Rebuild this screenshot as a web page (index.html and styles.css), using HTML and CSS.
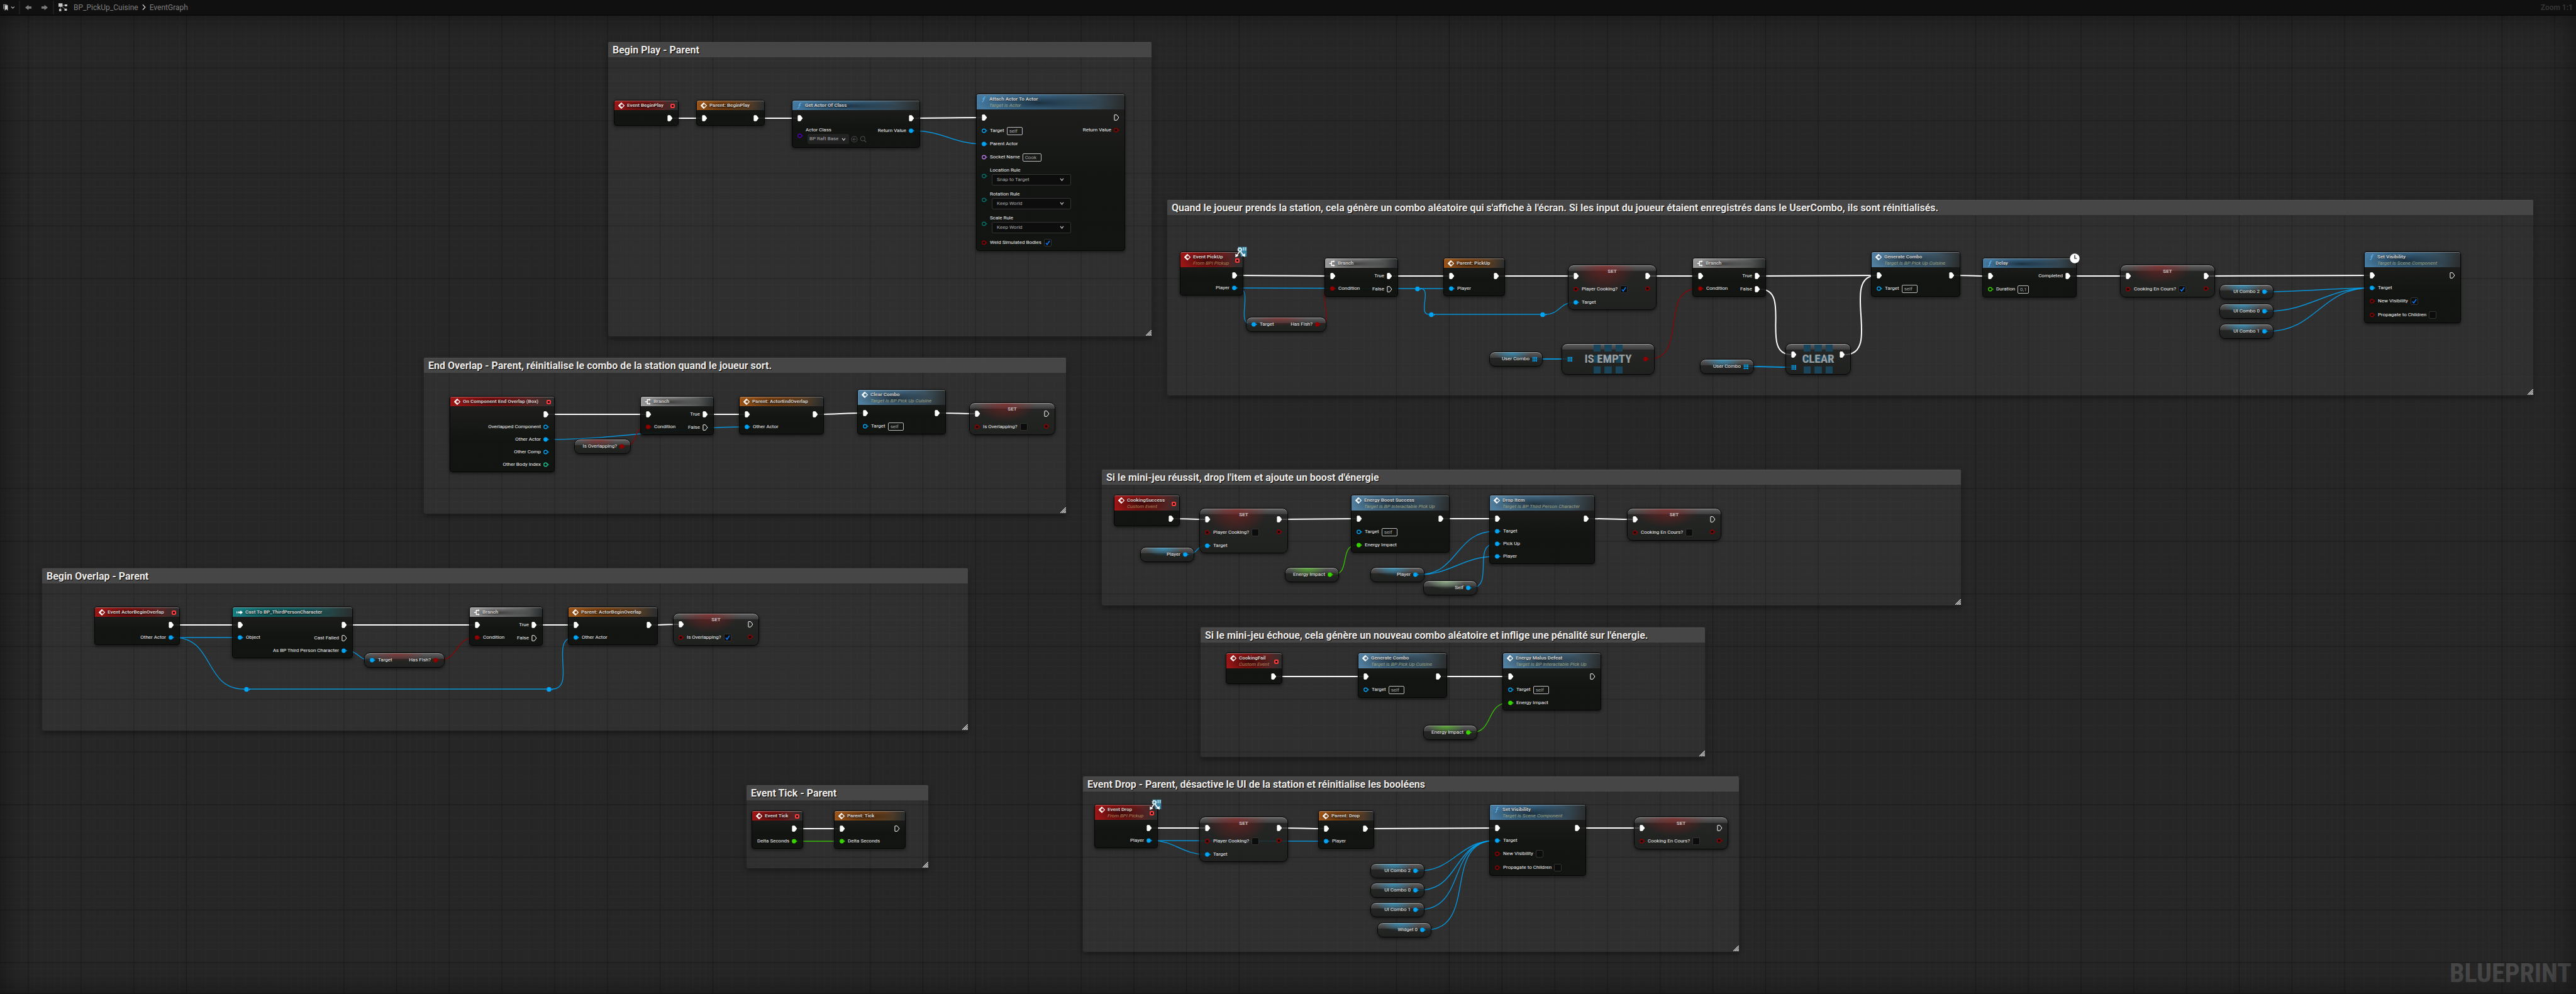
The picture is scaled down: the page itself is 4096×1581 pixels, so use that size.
FILE: index.html
```html
<!DOCTYPE html>
<html lang="fr">
<head>
<meta charset="utf-8">
<title>BP_PickUp_Cuisine - EventGraph</title>
<link rel="stylesheet" href="styles.css">
</head>
<body>
<svg class="sprite" aria-hidden="true">
  <symbol id="i-event" viewBox="0 0 14 14"><path d="M7 .8 13.2 7 7 13.2 .8 7z" fill="none" stroke="#fff" stroke-width="1.5"/><path d="M8 1 8 5 5 5 5 9 8 9 8 13 6.500 13 .5 7 6.500 1z" fill="#fff"/></symbol>
  <symbol id="i-fn" viewBox="0 0 14 14"><path d="M11 2.200C9.500.8 8.100 1.600 7.700 3.600L6.200 10.500C5.800 12.400 4.500 13.200 3 12M4.800 6h5" fill="none" stroke="#5fb4f0" stroke-width="1.600"/></symbol>
  <symbol id="i-branch" viewBox="0 0 14 14"><path d="M1 7h5M11 2.500H6v9h5" fill="none" stroke="#fff" stroke-width="2"/><path d="M10 0l3.500 2.500L10 5zM10 9l3.500 2.500L10 14z" fill="#fff"/></symbol>
  <symbol id="i-cast" viewBox="0 0 14 14"><path d="M0 5h1.500v4H0zM3 5h2v4H3zM6 5h3V2.500L14 7 9 11.500V9H6z" fill="#fff"/></symbol>
  <symbol id="p-exec" viewBox="0 0 12 14"><path d="M1.500 1h4.700L10.800 7 6.200 13H1.500Q1 13 1 12.500V1.500Q1 1 1.500 1z" stroke="#fff" stroke-width="1.400" stroke-linejoin="round"/></symbol>
  <symbol id="p-data" viewBox="0 0 14 12"><circle cx="5.500" cy="6" r="4.300" stroke="currentColor" stroke-width="2"/><path d="M11.300 3.500 14 6l-2.700 2.500z" fill="currentColor"/></symbol>
  <symbol id="p-array" viewBox="0 0 12 12"><path d="M1 1h3v3H1zM5 1h3v3H5zM9 1h3v3H9zM1 5h3v3H1zM5 5h3v3H5zM9 5h3v3H9zM1 9h3v3H1zM5 9h3v3H5zM9 9h3v3H9z" fill="currentColor"/></symbol>
  <symbol id="i-grid" viewBox="0 0 70 70"><path d="M0 0h17v17H0zM26 0h18v17H26zM53 0h17v17H53zM0 26h17v18H0zM26 26h18v18H26zM53 26h17v18H53zM0 53h17v17H0zM26 53h18v17H26zM53 53h17v17H53z" fill="#1a4459"/></symbol>
  <symbol id="i-clock" viewBox="0 0 24 24"><circle cx="12" cy="12" r="11.500" fill="#fff"/><path d="M12 4v8h5" fill="none" stroke="#111" stroke-width="1.800"/></symbol>
  <symbol id="i-iface" viewBox="0 0 30 28"><path d="M6 1h22v24H14z" fill="#3a83a3"/><path d="M19 2h3v8h-3zM24 2h3v8h-3z" fill="#a9dbe6"/><circle cx="11" cy="8" r="5" fill="none" stroke="#e8f6fa" stroke-width="2.500" stroke-dasharray="2.200 1.700"/><circle cx="11" cy="8" r="3.500" fill="none" stroke="#e8f6fa" stroke-width="2"/><path d="M10 13 4 22M13 13l7 9" stroke="#fff" stroke-width="2.500"/><path d="M0 18v9l8-4zM24 17v9l-8-4z" fill="#fff"/></symbol>
  <symbol id="i-grip" viewBox="0 0 13 13"><path d="M0 13 13 0M4 13l9-9M8 13l5-5M11.500 13l1.500-1.500" stroke="#eee" stroke-width="1.600"/></symbol>
  <symbol id="i-back" viewBox="0 0 14 14"><path d="M7.500 1v3.600H14v4.800H7.500V13L0 7z" fill="currentColor"/></symbol>
  <symbol id="i-use" viewBox="0 0 16 16"><circle cx="8" cy="8" r="6.500" fill="none" stroke="currentColor" stroke-width="1.500"/><path d="M12 8H5M8 5 5 8l3 3" fill="none" stroke="currentColor" stroke-width="1.500"/></symbol>
  <symbol id="i-find" viewBox="0 0 16 16"><circle cx="7" cy="6.500" r="5" fill="none" stroke="currentColor" stroke-width="1.500"/><path d="M10.500 10.500 15 15" stroke="currentColor" stroke-width="1.800"/></symbol>
</svg>

<header class="toolbar">
  <button class="tool tool-marks" aria-label="Bookmarks">
    <svg viewBox="0 0 28 17" width="18" height="11"><path d="M0 1h9v2H2.500v9L0 14z" fill="#777"/><path d="M4 3.500h7.500V17L7.800 13 4 17z" fill="#d2d2d2"/><path d="m20 7 4 4 4-4" fill="none" stroke="#ccc" stroke-width="1.600"/></svg>
  </button>
  <span class="rule"></span>
  <button class="tool" aria-label="Back"><svg width="12" height="10"><use href="#i-back"/></svg></button>
  <button class="tool flip" aria-label="Forward"><svg width="12" height="10"><use href="#i-back"/></svg></button>
  <span class="rule"></span>
  <nav class="crumbs">
    <svg viewBox="0 0 22 20" width="14" height="13"><path d="M5 5h13M5 5v12M5 5l13 11" stroke="#999" stroke-width="1.200"/><path d="M0 0h10v9H0zM15.500 3H22v4.500h-6.500zM1.500 14.500H7V20H1.500zM15 13.500h6v5h-6z" fill="#c8c8c8"/></svg>
    <a href="#blueprint">BP_PickUp_Cuisine</a>
    <svg viewBox="0 0 10 16" width="6" height="11"><path d="m1.500 1 6.500 7-6.500 7" fill="none" stroke="#fff" stroke-width="1.800"/></svg>
    <a href="#graph">EventGraph</a>
  </nav>
  <output class="zoom">Zoom 1:1</output>
</header>

<main class="graph" id="graph">
  <div class="comments" id="comments"></div>
  <svg class="wires" id="wires"></svg>
  <div class="nodes" id="nodes"></div>
  <p class="watermark">BLUEPRINT</p>
</main>
<script src="graph.js"></script>
</body>
</html>
```

FILE: styles.css
```css
:root {
  --cell: calc(100vw * 16 / 6264);
  --block: calc(100vw * 128 / 6264);
  --bool: #930000;
  --obj: #00a5f5;
  --real: #38d400;
  --int: #1cc795;
  --enum: #00736a;
  --name: #b77ae8;
  --class: #5200b0;
}

* { box-sizing: border-box; }

body {
  margin: 0;
  height: 100vh;
  display: flex;
  flex-direction: column;
  background: #262626;
  color: #eee;
  font: 8px/10px Roboto, "Liberation Sans", sans-serif;
}

h2, h3, p { margin: 0; font-size: inherit; }
svg { display: block; flex: none; }
.sprite { position: absolute; width: 0; height: 0; }

/* toolbar */
.toolbar {
  display: flex;
  align-items: center;
  height: 25px;
  padding: 0 5px;
  background: #101010;
  border-bottom: 2px solid #0b0b0b;
  font-size: 12px;
  line-height: 16px;
}
.tool {
  display: flex;
  border: 0;
  padding: 0;
  margin: 0 7px;
  background: none;
  color: #7c7c7c;
}
.tool-marks { margin: 0 7px 0 0; }
.flip { transform: scaleX(-1); }
.rule { width: 2px; height: 22px; background: #1d1d1d; }
.crumbs { display: flex; align-items: center; gap: 6px; margin-left: 7px; }
.crumbs a { color: #7d7d7d; text-decoration: none; }
.crumbs a:first-of-type { margin-left: 4px; }
.zoom { margin-left: auto; font-weight: 700; color: #333; }

/* canvas */
.graph {
  position: relative;
  flex: 1;
  overflow: hidden;
  background-color: #262626;
  background-image:
    repeating-linear-gradient(90deg, #1c1c1c 0 1px, transparent 1px var(--block)),
    repeating-linear-gradient(#1c1c1c 0 1px, transparent 1px var(--block)),
    repeating-linear-gradient(90deg, #292929 0 1px, transparent 1px var(--cell)),
    repeating-linear-gradient(#292929 0 1px, transparent 1px var(--cell));
  background-position: calc(var(--block) * 68 / 128) 0, 0 calc(var(--block) * -2 / 128), calc(var(--cell) * 4 / 16) 0, 0 calc(var(--cell) * -2 / 16);
}
.graph::after {
  content: "";
  position: absolute;
  inset: 0;
  box-shadow: inset 0 0 44px rgba(0, 0, 0, .5);
  pointer-events: none;
}
.wires { position: absolute; inset: 0; width: 100%; height: 100%; fill: none; }
.watermark {
  position: absolute;
  right: 7px;
  bottom: 8px;
  font: 700 42px/50px "Roboto Condensed", "Liberation Sans Narrow", Roboto, sans-serif;
  color: rgba(255, 255, 255, .18);
}

/* comment boxes */
.comment {
  position: absolute;
  border-radius: 3px;
  background: rgba(255, 255, 255, .045);
  box-shadow: 0 0 0 2px rgba(255, 255, 255, .02), 0 3px 8px rgba(0, 0, 0, .5);
}
.comment h2 {
  height: 24px;
  padding: 0 7px;
  border-top: 1px solid #505050;
  border-radius: 2px 2px 0 0;
  background: #464646;
  color: #ececec;
  font-size: 16px;
  line-height: 24px;
  white-space: nowrap;
  text-shadow: 1px 1px 1px #000;
}
.comment svg { position: absolute; right: 0; bottom: 1px; }

/* nodes */
.node {
  position: absolute;
  display: flex;
  flex-direction: column;
  border: 1px solid #060606;
  border-radius: 4px;
  background: linear-gradient(rgba(31, 31, 30, .93), rgba(15, 18, 15, .93) 60%);
  box-shadow: 0 2px 5px rgba(0, 0, 0, .55);
  white-space: nowrap;
}
.head {
  display: flex;
  align-items: center;
  gap: 4px;
  height: 15px;
  padding: 0 5px 0 6px;
  border-top: 1px solid rgba(255, 255, 255, .35);
  border-radius: 3px 3px 0 0;
  background:
    radial-gradient(ellipse 42% 75% at 42% 55%, rgba(0, 0, 0, .6), transparent),
    linear-gradient(100deg, var(--tint) 45%, #2b2e2e 98%);
}
.head h3 { color: #d2cfcc; font-weight: 700; text-shadow: 0 1px 1px rgba(0, 0, 0, .6); }
.head .titles { flex: 1; }
.head.two { height: 24px; align-items: flex-start; padding-top: 2px; }
.head p { color: #9da382; font-style: italic; }
.head.two .delegate { align-self: center; margin-bottom: 1px; }
.event { --tint: #9c1616; }
.event .head p { color: #a9855a; }
.parent { --tint: #9a5418; }
.func { --tint: #45799f; }
.call { --tint: #527f9f; }
.flow { --tint: #9a9a9a; }
.cast { --tint: #167c7e; }
.delegate { width: 7px; height: 7px; border: 2px solid #ff3b3b; border-radius: 2px; background: #200; }

.pins { position: relative; display: flex; justify-content: space-between; padding: 2px 8px 1px; }
.col { display: flex; flex-direction: column; }
.col.out { align-items: flex-end; }
.pin { display: flex; align-items: center; gap: 4px; height: 20px; color: var(--ink); }
.pin.exec { height: 21px; }
.pin.tall { height: 22px; }
.pin.combo { height: 38px; }
.pin.picker { height: 35px; }
.out .pin { flex-direction: row-reverse; }
.pin label, .pin span { color: #f0f0f0; }
.dot { fill: #0b0c0b; }
.on .dot { fill: currentColor; }
.exec .dot { fill: none; }
.exec.on .dot { fill: #fff; }
.bool { --ink: var(--bool); }
.obj, .array { --ink: var(--obj); }
.real { --ink: var(--real); }
.int { --ink: var(--int); }
.enum { --ink: var(--enum); }
.name { --ink: var(--name); }
.class { --ink: var(--class); }
.stack { display: flex; flex-direction: column; gap: 1px; }
.line { display: flex; align-items: center; gap: 3px; }

input, select { margin: 0; font: inherit; outline: 0; }
input[type="text"] {
  width: 25px;
  height: 13px;
  padding: 0 3px;
  border: 1px solid #bdbdbd;
  border-radius: 2px;
  background: transparent;
  color: #a8a8a8;
}
input.w-wide { width: 30px; }
input.w-short { width: 18px; }
input[type="checkbox"] {
  appearance: none;
  width: 12px;
  height: 12px;
  border: 1px solid #333;
  border-radius: 2px;
  background: #0c0c0c;
}
input[type="checkbox"]:checked {
  background: #0c0c0c url("data:image/svg+xml,%3Csvg xmlns='http://www.w3.org/2000/svg' viewBox='0 0 10 10'%3E%3Cpath d='M2 5.500 4 8 8 2' fill='none' stroke='%230a7cff' stroke-width='1.500'/%3E%3C/svg%3E");
}
select {
  appearance: none;
  width: 126px;
  height: 18px;
  margin-left: 3px;
  padding: 0 20px 0 7px;
  border: 1px solid #333;
  border-radius: 2px;
  background: #0d0d0d url("data:image/svg+xml,%3Csvg xmlns='http://www.w3.org/2000/svg' viewBox='0 0 8 6'%3E%3Cpath d='M1 1 4 5 7 1' fill='none' stroke='%23ccc' stroke-width='1.300'/%3E%3C/svg%3E") no-repeat right 10px center / 7px 5px;
  color: #aaa;
}
.picker select {
  width: 66px;
  height: 16px;
  padding: 0 16px 0 2px;
  border-color: #222;
  background-color: #222;
  background-position: right 4px center;
}
.picker button { padding: 0; border: 0; background: none; color: #4a4a4a; }

/* variable getters and setters */
.glossy {
  border-radius: 9px;
  background:
    radial-gradient(ellipse 36% 60% at 42% 0, var(--glow), transparent),
    linear-gradient(rgba(130, 130, 130, .6), rgba(70, 70, 70, .5) 9px, rgba(34, 36, 34, .8) 9px, rgba(28, 30, 28, .85));
  box-shadow: inset 0 1px 0 rgba(220, 220, 220, .5), 0 2px 5px rgba(0, 0, 0, .55);
}
.get .pins { padding-top: 1px; }
.get .col.out { margin-left: auto; }
.set .pins, .op .pins { padding-top: 6px; }
.op .pins.mid { padding: 14px 8px; }
.g-red { --glow: rgba(150, 30, 30, .6); }
.g-blue { --glow: rgba(45, 155, 205, .8); }
.g-green { --glow: rgba(85, 190, 40, .8); }
.g-self { --glow: rgba(160, 200, 150, .8); }
.g-none { --glow: transparent; }
.set h3 {
  position: absolute;
  top: 5px;
  left: 0;
  right: 0;
  text-align: center;
  color: #c8c0c0;
  font-weight: 700;
}
.op h3 {
  position: absolute;
  inset: 0;
  display: grid;
  place-items: center;
  color: #9a9fa1;
  font: 700 19px/24px "Roboto Condensed", "Liberation Sans Narrow", Roboto, sans-serif;
}
.op .tiles { position: absolute; left: 50%; top: 1px; margin-left: -23px; }
.badge { position: absolute; z-index: 1; }
.badge.iface { right: -8px; top: -9px; }
.badge.clock { right: -6px; top: -8px; }
.knot { position: absolute; margin: -4px 0 0 -4px; color: var(--obj); }
.knot .dot { fill: currentColor; }
```

FILE: graph.js
```js
// Graph units: 1 unit = 1 px at Zoom 1:1 on a 6264-unit wide view.
const VIEW_WIDTH = 6264;
const VIEW_TOP = 39;

const COLORS = { exec: '#ffffff', obj: '#00a5f5', array: '#00a5f5', bool: '#930000', real: '#38d400' };

const pin = (kind) => (label = '', extra = {}) => ({ kind, label, ...extra });
const exec = pin('exec'), obj = pin('obj'), bool = pin('bool'), real = pin('real'),
  int = pin('int'), arr = pin('array');
const self = () => obj('Target', { text: 'self' });
const check = (label, on) => bool(label, { check: true, on });
const combo = (label, value) => ({ kind: 'enum', label, select: value });

// [left, top, right, bottom, title]
const comments = [
  [1479, 103, 2801, 818, 'Begin Play - Parent'],
  [2839, 487, 6161, 962, "Quand le joueur prends la station, cela génère un combo aléatoire qui s'affiche à l'écran. Si les input du joueur étaient enregistrés dans le UserCombo, ils sont réinitialisés."],
  [1031, 871, 2593, 1250, 'End Overlap - Parent, réinitialise le combo de la station quand le joueur sort.'],
  [2679, 1143, 4768, 1473, "Si le mini-jeu réussit, drop l'item et ajoute un boost d'énergie"],
  [2919, 1527, 4145, 1842, "Si le mini-jeu échoue, cela génère un nouveau combo aléatoire et inflige une pénalité sur l'énergie."],
  [102, 1383, 2353, 1777, 'Begin Overlap - Parent'],
  [1815, 1911, 2257, 2113, 'Event Tick - Parent'],
  [2633, 1889, 4228, 2316, 'Event Drop - Parent, désactive le UI de la station et réinitialise les booléens'],
];

const nodes = [];
const add = (id, type, x, y, w, title, sub, ins, outs, opt = {}) =>
  nodes.push({ id, type, x, y, w, title, sub, ins, outs, ...opt });
const event = (id, x, y, w, title, sub, outs, opt) => add(id, 'event', x, y, w, title, sub, [], outs, opt);
const parent = (id, x, y, w, title, ins = [], outs = []) =>
  add(id, 'parent', x, y, w, 'Parent: ' + title, '', [exec(), ...ins], [exec(), ...outs]);
const branch = (id, x, y) =>
  add(id, 'flow', x, y, 179, 'Branch', '', [exec(), bool('Condition')], [exec('True'), exec('False')]);
const set = (id, x, y, w, label, on, ins = []) =>
  add(id, 'set', x, y, w, 'SET', '', [exec(), check(label, on), ...ins], [exec(), bool()], { glow: 'red' });
const get = (id, x, y, w, glow, out, ins = []) => add(id, 'get', x, y, w, '', '', ins, [out], { glow });

// Begin Play
event('play', 1492, 244, 158, 'Event BeginPlay', '', [exec()]);
parent('pplay', 1693, 244, 166, 'BeginPlay');
add('getactor', 'func', 1925, 244, 312, 'Get Actor Of Class', '',
  [exec(), { kind: 'class', label: 'Actor Class', picker: 'BP Raft Base T' }], [exec(), obj('Return Value')]);
add('attach', 'func', 2373, 228, 362, 'Attach Actor To Actor', 'Target is Actor',
  [exec(), self(), obj('Parent Actor'), { kind: 'name', label: 'Socket Name', text: 'Cook', size: 'w-wide' },
    combo('Location Rule', 'Snap to Target'), combo('Rotation Rule', 'Keep World'), combo('Scale Rule', 'Keep World'),
    check('Weld Simulated Bodies', true)], [exec(), bool('Return Value')]);

// Pick up
event('pickup', 2869, 612, 154, 'Event PickUp', 'From BPI Pickup', [exec(), obj('Player')], { badge: 'iface' });
branch('br1', 3221, 628);
parent('ppickup', 3509, 628, 150, 'PickUp', [obj('Player')]);
set('setcook', 3812, 644, 216, 'Player Cooking?', true, [obj('Target')]);
get('fish1', 3029, 772, 195, 'red', bool('Has Fish?'), [obj('Target')]);
get('combo1', 3621, 855, 130, 'blue', arr('User Combo'));
add('empty', 'op', 3797, 836, 227, 'IS EMPTY', '', [arr()], [bool()], { glow: 'none', mid: true });
branch('br2', 4116, 628);
get('combo2', 4133, 874, 131, 'blue', arr('User Combo'));
add('clear', 'op', 4341, 836, 159, 'CLEAR', '', [exec(), arr()], [exec()], { glow: 'none' });
add('gen1', 'call', 4549, 612, 217, 'Generate Combo', 'Target is BP Pick Up Cuisine', [exec(), self()], [exec()]);
add('delay', 'func', 4821, 628, 229, 'Delay', '',
  [exec(), real('Duration', { text: '0,1', size: 'w-short' })], [exec('Completed')], { badge: 'clock' });
set('setcours', 5156, 644, 231, 'Cooking En Cours?', true);
get('ui2', 5397, 692, 131, 'blue', obj('UI Combo 2'));
get('ui0', 5397, 740, 131, 'blue', obj('UI Combo 0'));
get('ui1', 5397, 788, 131, 'blue', obj('UI Combo 1'));
add('vis1', 'func', 5749, 612, 236, 'Set Visibility', 'Target is Scene Component',
  [exec(), obj('Target'), check('New Visibility', true), check('Propagate to Children', false)], [exec()]);

// End overlap
event('endov', 1093, 964, 255, 'On Component End Overlap (Box)', '',
  [exec(), obj('Overlapped Component'), obj('Other Actor'), obj('Other Comp'), int('Other Body Index')]);
branch('br3', 1557, 964);
parent('pendov', 1797, 964, 207, 'ActorEndOverlap', [obj('Other Actor')]);
add('clearcombo', 'call', 2085, 948, 216, 'Clear Combo', 'Target is BP Pick Up Cuisine', [exec(), self()], [exec()]);
set('setov1', 2357, 980, 210, 'Is Overlapping?', false);
get('isov', 1397, 1068, 137, 'red', bool('Is Overlapping?'));

// Mini-game success
event('success', 2709, 1204, 160, 'CookingSuccess', 'Custom Event', [exec()]);
set('setcook2', 2917, 1236, 215, 'Player Cooking?', false, [obj('Target')]);
get('player1', 2773, 1332, 131, 'blue', obj('Player'));
add('boost', 'call', 3285, 1204, 240, 'Energy Boost Success', 'Target is BP Interactable Pick Up',
  [exec(), self(), real('Energy Impact')], [exec()]);
get('energy1', 3125, 1380, 131, 'green', real('Energy Impact'));
get('player2', 3333, 1380, 131, 'blue', obj('Player'));
get('self1', 3461, 1412, 131, 'self', obj('Self'));
add('dropitem', 'call', 3621, 1204, 257, 'Drop Item', 'Target is BP Third Person Character',
  [exec(), obj('Target'), obj('Pick Up'), obj('Player')], [exec()]);
set('setcours2', 3957, 1236, 230, 'Cooking En Cours?', false);

// Mini-game failure
event('fail', 2981, 1588, 138, 'CookingFail', 'Custom Event', [exec()]);
add('gen2', 'call', 3301, 1588, 217, 'Generate Combo', 'Target is BP Pick Up Cuisine', [exec(), self()], [exec()]);
add('malus', 'call', 3653, 1588, 240, 'Energy Malus Defeat', 'Target is BP Interactable Pick Up',
  [exec(), self(), real('Energy Impact')], [exec()]);
get('energy2', 3461, 1764, 131, 'green', real('Energy Impact'));

// Begin overlap
event('beginov', 229, 1476, 208, 'Event ActorBeginOverlap', '', [exec(), obj('Other Actor')]);
add('castchar', 'cast', 565, 1476, 294, 'Cast To BP_ThirdPersonCharacter', '',
  [exec(), obj('Object')], [exec(), exec('Cast Failed'), obj('As BP Third Person Character')]);
get('fish2', 885, 1588, 195, 'red', bool('Has Fish?'), [obj('Target')]);
branch('br4', 1141, 1476);
parent('pbeginov', 1381, 1476, 218, 'ActorBeginOverlap', [obj('Other Actor')]);
set('setov2', 1637, 1492, 210, 'Is Overlapping?', true);

// Tick
event('tick', 1828, 1972, 125, 'Event Tick', '', [exec(), real('Delta Seconds')]);
parent('ptick', 2028, 1972, 175, 'Tick', [real('Delta Seconds')]);

// Drop
event('drop', 2661, 1956, 154, 'Event Drop', 'From BPI Pickup', [exec(), obj('Player')], { badge: 'iface' });
set('setcook3', 2917, 1988, 215, 'Player Cooking?', false, [obj('Target')]);
parent('pdrop', 3205, 1972, 136, 'Drop', [obj('Player')]);
add('vis2', 'func', 3621, 1956, 236, 'Set Visibility', 'Target is Scene Component',
  [exec(), obj('Target'), check('New Visibility', false), check('Propagate to Children', false)], [exec()]);
get('ui2b', 3333, 2100, 131, 'blue', obj('UI Combo 2'));
get('ui0b', 3333, 2148, 131, 'blue', obj('UI Combo 0'));
get('ui1b', 3333, 2196, 131, 'blue', obj('UI Combo 1'));
get('widget', 3349, 2244, 131, 'blue', obj('Widget 0'));
set('setcours3', 3973, 1988, 230, 'Cooking En Cours?', false);

// Reroute knots: id -> centre
const knots = { k1: [3447, 702], k2: [3480, 765], k3: [3751, 765], k4: [599, 1677], k5: [1335, 1677] };

// "node:output node:input"
const wires = `
play:0 pplay:0|pplay:0 getactor:0|getactor:0 attach:0|getactor:1 attach:2
pickup:0 br1:0|pickup:1 k1|pickup:1 fish1:0|fish1:0 br1:1|br1:0 ppickup:0|k1 ppickup:1|k1 k2|k2 k3|k3 setcook:2
ppickup:0 setcook:0|setcook:0 br2:0|combo1:0 empty:0|empty:0 br2:1|br2:0 gen1:0|br2:1 clear:0|combo2:0 clear:1
clear:0 gen1:0|gen1:0 delay:0|delay:0 setcours:0|setcours:0 vis1:0|ui2:0 vis1:1|ui0:0 vis1:1|ui1:0 vis1:1
endov:0 br3:0|endov:2 pendov:1|isov:0 br3:1|br3:0 pendov:0|pendov:0 clearcombo:0|clearcombo:0 setov1:0
success:0 setcook2:0|player1:0 setcook2:2|setcook2:0 boost:0|energy1:0 boost:2|boost:0 dropitem:0
player2:0 dropitem:1|player2:0 dropitem:3|self1:0 dropitem:2|dropitem:0 setcours2:0
fail:0 gen2:0|gen2:0 malus:0|energy2:0 malus:2
beginov:0 castchar:0|beginov:1 castchar:1|beginov:1 k4|k4 k5|k5 pbeginov:1|castchar:2 fish2:0|fish2:0 br4:1
castchar:0 br4:0|br4:0 pbeginov:0|pbeginov:0 setov2:0
tick:0 ptick:0|tick:1 ptick:1
drop:0 setcook3:0|drop:1 setcook3:2|drop:1 pdrop:1|setcook3:0 pdrop:0|pdrop:0 vis2:0|vis2:0 setcours3:0
ui2b:0 vis2:1|ui0b:0 vis2:1|ui1b:0 vis2:1|widget:0 vis2:1`
  .trim().split(/[|\n]/).map((s) => s.split(' '));

const linked = new Set(wires.flatMap(([a, b]) => ['o-' + a, 'i-' + b]));

const use = (id, w, h, cls = '') => `<svg class="${cls}" width="${w}" height="${h}"><use href="#${id}"/></svg>`;

function pinDot(kind) {
  if (kind === 'exec') return use('p-exec', 9, 10, 'dot');
  return kind === 'array' ? use('p-array', 8, 8, 'dot') : use('p-data', 9, 8, 'dot');
}

function pinHtml(p, key) {
  const field = 'f-' + key.replace(':', '-');
  let size = '', body = p.label ? `<span>${p.label}</span>` : '';
  const label = `<label for="${field}">${p.label}</label>`;
  if (p.text) {
    size = 'tall';
    body = `${label}<input type="text" id="${field}" class="${p.size || ''}" value="${p.text}">`;
  } else if (p.check) {
    size = 'tall';
    body = `${label}<input type="checkbox" id="${field}" ${p.on ? 'checked' : ''}>`;
  } else if (p.select) {
    size = 'combo';
    body = `<div class="stack">${label}<select id="${field}"><option>${p.select}</option></select></div>`;
  } else if (p.picker) {
    size = 'picker';
    body = `<div class="stack">${label}<div class="line"><select id="${field}"><option>${p.picker}</option></select>
      <button aria-label="Use selected">${use('i-use', 11, 11)}</button><button aria-label="Browse">${use('i-find', 11, 11)}</button></div></div>`;
  }
  return `<div class="pin ${p.kind} ${size} ${linked.has(key) ? 'on' : ''}" data-pin="${key}">${pinDot(p.kind)}${body}</div>`;
}

const ICONS = { event: 'i-event', parent: 'i-event', call: 'i-event', func: 'i-fn', flow: 'i-branch', cast: 'i-cast' };

function headHtml(n) {
  if (n.type === 'get') return '';
  if (n.type === 'set') return `<h3>${n.title}</h3>`;
  if (n.type === 'op') return `${use('i-grid', 46, 46, 'tiles')}<h3>${n.title}</h3>`;
  return `<div class="head ${n.sub ? 'two' : ''}">${use(ICONS[n.type], 10, 10)}
    <div class="titles"><h3>${n.title}</h3>${n.sub ? `<p>${n.sub}</p>` : ''}</div>
    ${n.type === 'event' ? '<i class="delegate"></i>' : ''}</div>`;
}

function render() {
  const canvas = document.getElementById('graph');
  const zoom = canvas.clientWidth / VIEW_WIDTH;
  const px = (v) => Math.round(v * zoom);
  const py = (v) => Math.round((v - VIEW_TOP) * zoom);

  document.getElementById('comments').innerHTML = comments.map(([l, t, r, b, title]) =>
    `<section class="comment" style="left:${px(l)}px;top:${py(t)}px;width:${px(r - l)}px;height:${px(b - t)}px">
      <h2>${title}</h2>${use('i-grip', 9, 9)}</section>`).join('');

  document.getElementById('nodes').innerHTML = nodes.map((n) => {
    const glossy = ['get', 'set', 'op'].includes(n.type) ? `glossy g-${n.glow}` : '';
    const col = (side, list) => list.length
      ? `<div class="col ${side === 'o' ? 'out' : 'in'}">${list.map((p, i) => pinHtml(p, `${side}-${n.id}:${i}`)).join('')}</div>` : '';
    const badge = n.badge === 'iface' ? use('i-iface', 20, 18, 'badge iface')
      : n.badge ? use('i-clock', 16, 16, 'badge clock') : '';
    return `<article class="node ${n.type} ${glossy}" style="left:${px(n.x)}px;top:${py(n.y)}px;width:${px(n.w)}px">
      ${headHtml(n)}<div class="pins ${n.mid ? 'mid' : ''}">${col('i', n.ins) || '<div></div>'}${col('o', n.outs)}</div>${badge}</article>`;
  }).join('') + Object.values(knots).map(([x, y]) =>
    `<i class="knot" style="left:${px(x)}px;top:${py(y)}px">${use('p-data', 10, 9, 'dot')}</i>`).join('');

  const base = canvas.getBoundingClientRect();
  const end = (ref, side) => {
    if (knots[ref]) return { x: px(knots[ref][0]) + (side === 'o' ? 5 : -4), y: py(knots[ref][1]), kind: 'obj' };
    const el = document.querySelector(`[data-pin="${side}-${ref}"]`);
    const r = el.querySelector('.dot').getBoundingClientRect();
    return { x: Math.round((side === 'o' ? r.right : r.left) - base.left), y: Math.round(r.top + r.height / 2 - base.top), kind: el.classList[1] };
  };
  document.getElementById('wires').innerHTML = wires.map(([from, to]) => {
    const a = end(from, 'o'), b = end(to, 'i');
    const pull = Math.round((Math.abs(b.x - a.x) + Math.abs(b.y - a.y)) / 3);
    const wide = a.kind === 'exec' || a.kind === 'array';
    return `<path d="M${a.x} ${a.y}C${a.x + pull} ${a.y} ${b.x - pull} ${b.y} ${b.x} ${b.y}"
      stroke="${COLORS[a.kind]}" stroke-width="${wide ? 2 : 1.4}" opacity="${a.kind === 'exec' ? 1 : 0.85}"/>`;
  }).join('');
}

render();
window.addEventListener('resize', render);
```
